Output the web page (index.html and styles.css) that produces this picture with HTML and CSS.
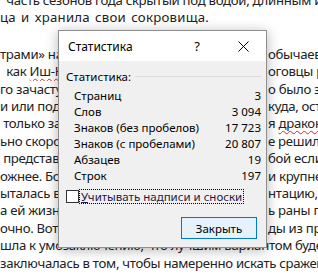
FILE: index.html
```html
<!DOCTYPE html>
<html lang="ru">
<head>
    <meta charset="UTF-8">
    <title>Статистика</title>
    <link rel="stylesheet" href="styles.css">
</head>
<body>
    <div class="doc">
        <div class="line">&nbsp;&nbsp;часть сезонов года скрытый под водой, длинным и</div>
        <div class="line loose">ца и хранила свои сокровища.</div>
        <div class="line gap">&nbsp;</div>
        <div class="line split"><span class="l">трами» на</span><span class="r">обычаев</span></div>
        <div class="line split"><span class="l">&nbsp;&nbsp;как <span class="typo">Иш-К</span></span><span class="r">оговцы р</span></div>
        <div class="line split"><span class="l">го зачасту</span><span class="r">о было за</span></div>
        <div class="line split"><span class="l">и или под</span><span class="r">куда, ост</span></div>
        <div class="line split"><span class="l">&nbsp;только за</span><span class="r">я <span class="typo">дракон</span></span></div>
        <div class="line split"><span class="l">ьно скоро</span><span class="r">е решили</span></div>
        <div class="line split"><span class="l">&nbsp;представ</span><span class="r">бой если</span></div>
        <div class="line split"><span class="l">ожнее. Бо</span><span class="r">и крупне</span></div>
        <div class="line split"><span class="l">ыталась во</span><span class="r">нтацию,</span></div>
        <div class="line split"><span class="l">а ей жизн</span><span class="r">ь раны п</span></div>
        <div class="line split"><span class="l">очно. Вот т</span><span class="r">ды из пр</span></div>
        <div class="line">шла к умозаключению, что лучшим вариантом буде</div>
        <div class="line">заключалась в том, чтобы намеренно искать сражен</div>
    </div>

    <div class="dialog">
        <div class="titlebar">
            <span class="title">Статистика</span>
            <span class="tb-btn">?</span>
            <span class="tb-btn">
                <svg width="11" height="11" viewBox="0 0 11 11"><path d="M0.5 0.5 L10.5 10.5 M10.5 0.5 L0.5 10.5" stroke="#000" stroke-width="1" fill="none"/></svg>
            </span>
        </div>
        <div class="dlg-body">
            <div class="group-head"><span>Статистика:</span><span class="rule"></span></div>
            <div class="stats">
                <div class="stat"><span>Страниц</span><span>3</span></div>
                <div class="stat"><span>Слов</span><span>3 094</span></div>
                <div class="stat"><span>Знаков (без пробелов)</span><span>17 723</span></div>
                <div class="stat"><span>Знаков (с пробелами)</span><span>20 807</span></div>
                <div class="stat"><span>Абзацев</span><span>19</span></div>
                <div class="stat"><span>Строк</span><span>197</span></div>
            </div>
            <div class="check-row">
                <span class="checkbox"></span>
                <span class="check-label"><u>У</u>читывать надписи и сноски</span>
            </div>
            <div class="actions">
                <button class="btn">Закрыть</button>
            </div>
        </div>
    </div>
</body>
</html>
```

FILE: styles.css
```css
* {
    margin: 0;
    padding: 0;
    box-sizing: border-box;
}

body {
    width: 318px;
    height: 275px;
    overflow: hidden;
    position: relative;
    background: #fff;
    font-family: 'Noto Sans', sans-serif;
}

/* текст документа за диалогом */
.doc {
    margin-top: -8px;
    font-size: 13.2px;
    line-height: 17.4px;
    letter-spacing: -0.3px;
    color: #222;
}

.line {
    white-space: nowrap;
}

.line.loose {
    letter-spacing: 0.25px;
    word-spacing: 1.5px;
}

.line.gap {
    height: 19px;
}

.line.split {
    display: flex;
}

.line .l {
    flex: none;
    width: 268px;
    overflow: hidden;
}

.typo {
    text-decoration: underline wavy #e02020;
    text-decoration-thickness: 1px;
    text-decoration-skip-ink: none;
    text-underline-offset: 2px;
}

/* диалог */
.dialog {
    position: absolute;
    left: 58px;
    top: 30px;
    width: 209px;
    height: 218px;
    display: flex;
    flex-direction: column;
    background: #f0f0f0;
    border: 1px solid #8f8f8f;
    box-shadow: 0 2px 12px rgba(0,0,0,0.3);
    font-size: 11.5px;
    color: #000;
}

.titlebar {
    height: 30px;
    display: flex;
    align-items: center;
    background: #fff;
    padding-left: 9px;
}

.title {
    flex: 1;
    font-size: 12px;
}

.tb-btn {
    width: 46px;
    height: 30px;
    display: flex;
    align-items: center;
    justify-content: center;
    font-size: 13px;
}

.dlg-body {
    flex: 1;
    padding: 7px 5px 0 7px;
    display: flex;
    flex-direction: column;
}

.group-head {
    display: flex;
    align-items: center;
    height: 16px;
}

.group-head .rule {
    flex: 1;
    height: 1px;
    margin-left: 4px;
    background: #dcdcdc;
}

.stats {
    margin-top: 4px;
    padding-left: 8px;
}

.stat {
    display: flex;
    justify-content: space-between;
    height: 16px;
    line-height: 16px;
}

.check-row {
    display: flex;
    align-items: center;
    margin-top: 5px;
    height: 15px;
}

.checkbox {
    width: 13px;
    height: 13px;
    background: #fff;
    border: 1px solid #333;
}

.check-label {
    margin-left: 1px;
    padding: 0 1px;
    line-height: 13px;
    outline: 1px dotted #000;
    color: #1f1846;
}

.check-label u {
    text-decoration-thickness: 1px;
}

.actions {
    display: flex;
    justify-content: flex-end;
    margin-top: 13px;
    padding-right: 4px;
}

.btn {
    width: 76px;
    height: 22px;
    background: #e5f1fb;
    border: 1px solid #0078d7;
    font-family: 'Noto Sans', sans-serif;
    font-size: 11.5px;
    color: #000;
}
```
